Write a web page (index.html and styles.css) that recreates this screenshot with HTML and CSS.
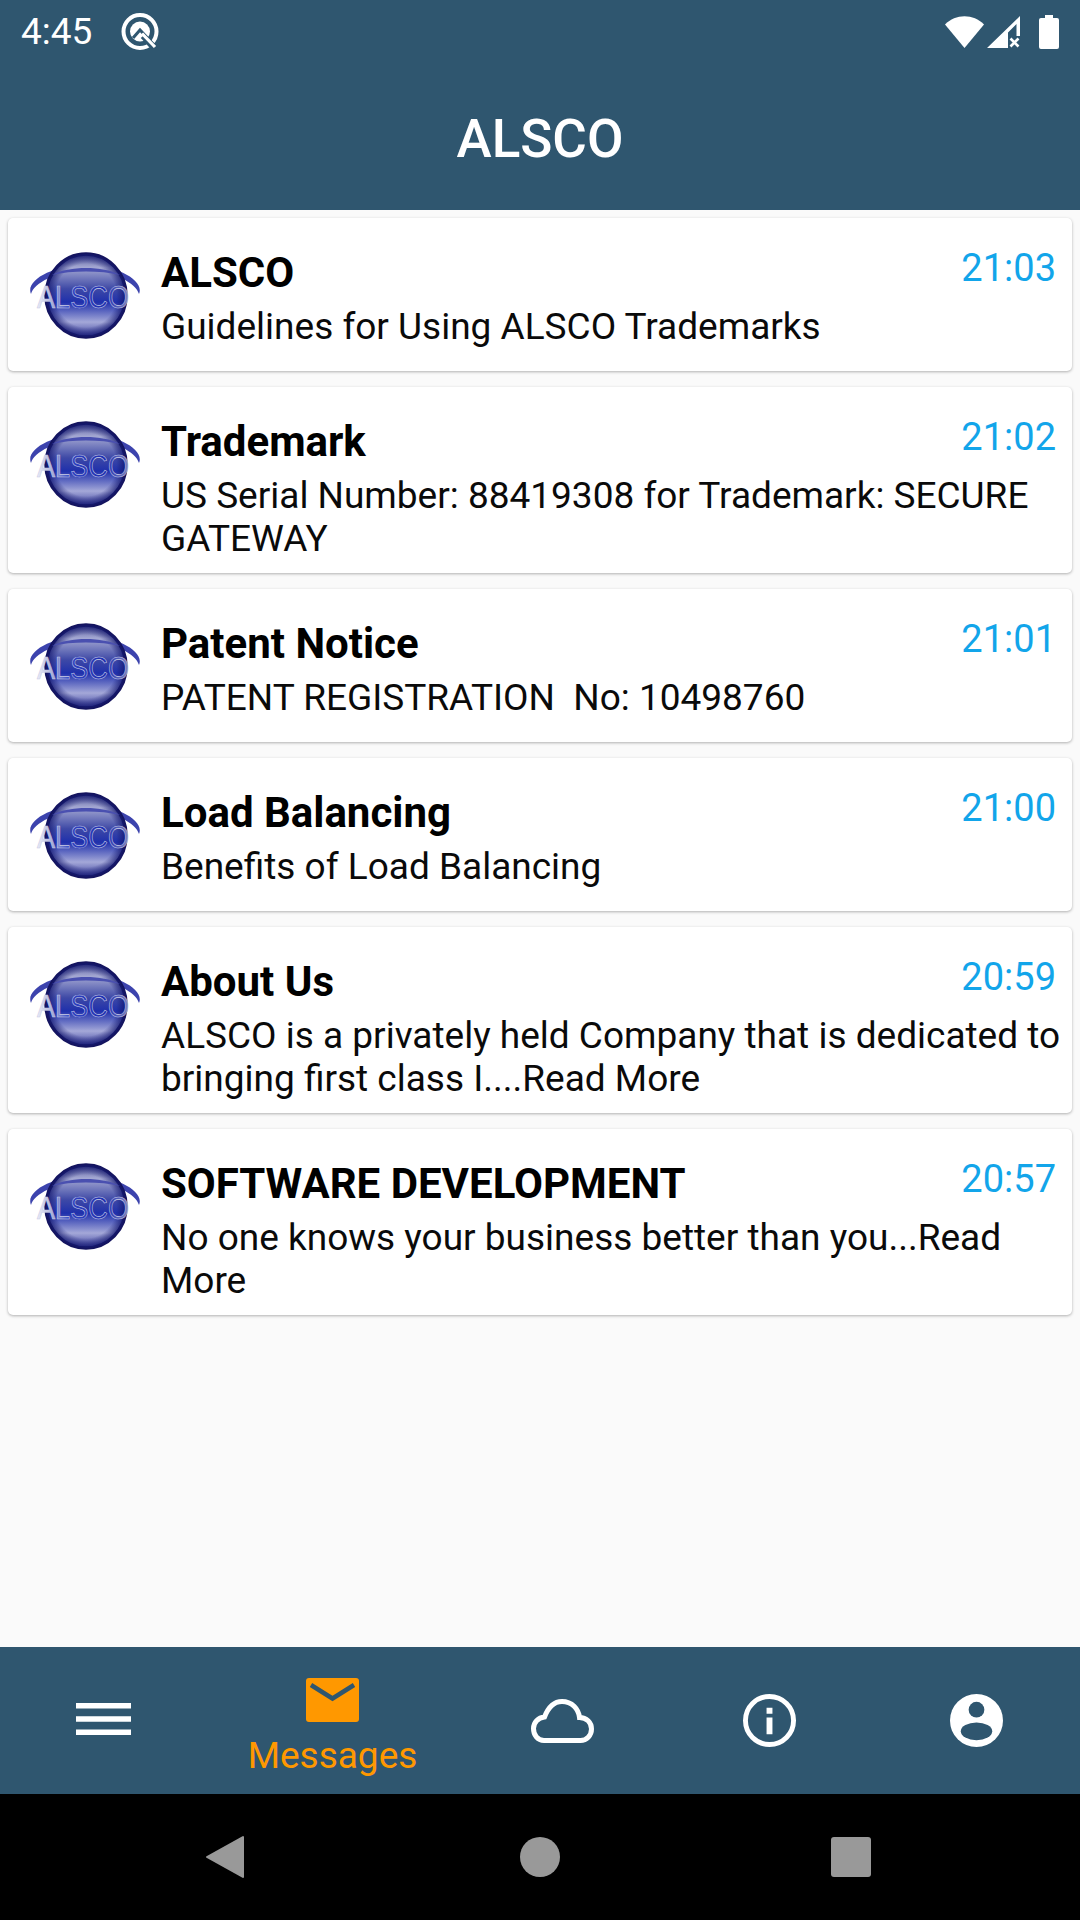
FILE: index.html
```html
<!DOCTYPE html>
<html lang="en">
<head>
<meta charset="utf-8">
<title>ALSCO</title>
<link rel="stylesheet" href="styles.css">
</head>
<body>
<svg class="defs" width="0" height="0" aria-hidden="true">
  <defs>
    <linearGradient id="globe" x1="0" y1="0" x2="0" y2="1">
      <stop offset="0" stop-color="#4d5298"/>
      <stop offset="0.16" stop-color="#a4a8d2"/>
      <stop offset="0.42" stop-color="#3e49a6"/>
      <stop offset="0.58" stop-color="#1f30ac"/>
      <stop offset="0.82" stop-color="#a4a8d8"/>
      <stop offset="1" stop-color="#3a3f9e"/>
    </linearGradient>
    <radialGradient id="edge" cx="50%" cy="50%" r="50%">
      <stop offset="0.76" stop-color="#14186e" stop-opacity="0"/>
      <stop offset="1" stop-color="#14186e" stop-opacity="0.85"/>
    </radialGradient>
    <linearGradient id="lettering" x1="0" y1="0" x2="1" y2="0">
      <stop offset="0" stop-color="#eceef8"/>
      <stop offset="0.16" stop-color="#aeb3da"/>
      <stop offset="0.36" stop-color="#2f42c0"/>
      <stop offset="0.75" stop-color="#1f2fae"/>
      <stop offset="1" stop-color="#7f86c0"/>
    </linearGradient>
    <symbol id="logo" viewBox="0 0 114 90">
      <path d="M3 44C-3 30 26 15 57 15s60 15 54 29c-3-11-25-23-54-23S6 33 3 44z" fill="#3c43ad"/>
      <ellipse cx="58" cy="45.500" rx="40" ry="41.500" fill="url(#globe)" stroke="#14145f" stroke-width="3.500"/>
      <ellipse cx="58" cy="45.500" rx="40" ry="41.500" fill="url(#edge)"/>
      <path d="M24 25c9-5 22-7 34-7s25 2 34 7c-10-2.500-22-3.500-34-3.500s-24 1-34 3.500z" fill="#4a50b0"/>
      <text x="9" y="58" textLength="92" lengthAdjust="spacingAndGlyphs" class="logo-text">ALSCO</text>
    </symbol>
  </defs>
</svg>
<div class="phone">
  <header class="appbar">
    <div class="status">
      <div class="status-left">
        <span class="clock">4:45</span>
        <svg class="q-icon" viewBox="0 0 38 38"><circle cx="19" cy="18.500" r="16.500" fill="none" stroke="#fff" stroke-width="4"/><circle cx="19" cy="18.500" r="10" fill="#fff"/><path d="M12 25l7-8 17 18" fill="none" stroke="#2f566f" stroke-width="3"/><path d="M22 23l10 11" stroke="#2f566f" stroke-width="6" fill="none"/><path d="M21 20.500l13 13.500" stroke="#fff" stroke-width="3.200" fill="none"/></svg>
      </div>
      <div class="status-right">
        <svg class="wifi" viewBox="0 0 39 32"><path d="M19.500 32 0 8.500C10.500-2.500 28.500-2.500 39 8.500z" fill="#fff"/></svg>
        <svg class="signal" viewBox="0 0 33 32"><path d="M33 0v20h-3.500V8L21 16.500V32H0z" fill="#fff"/><path d="M23.500 22.500l8 8m0-8l-8 8" stroke="#fff" stroke-width="2.600" fill="none"/></svg>
        <svg class="battery" viewBox="0 0 20 34"><path d="M6 0h8v3h4a2 2 0 0 1 2 2v27a2 2 0 0 1-2 2H2a2 2 0 0 1-2-2V5a2 2 0 0 1 2-2h4z" fill="#fff"/></svg>
      </div>
    </div>
    <h1 class="apptitle">ALSCO</h1>
  </header>

  <main class="list">
    <article class="card">
      <svg class="logo"><use href="#logo"/></svg>
      <div class="card-body">
        <div class="card-head"><h2 class="card-title">ALSCO</h2><time class="card-time">21:03</time></div>
        <p class="card-text">Guidelines for Using ALSCO Trademarks</p>
      </div>
    </article>
    <article class="card">
      <svg class="logo"><use href="#logo"/></svg>
      <div class="card-body">
        <div class="card-head"><h2 class="card-title">Trademark</h2><time class="card-time">21:02</time></div>
        <p class="card-text">US Serial Number: 88419308 for Trademark: SECURE GATEWAY</p>
      </div>
    </article>
    <article class="card">
      <svg class="logo"><use href="#logo"/></svg>
      <div class="card-body">
        <div class="card-head"><h2 class="card-title">Patent Notice</h2><time class="card-time">21:01</time></div>
        <p class="card-text">PATENT REGISTRATION&nbsp; No: 10498760</p>
      </div>
    </article>
    <article class="card">
      <svg class="logo"><use href="#logo"/></svg>
      <div class="card-body">
        <div class="card-head"><h2 class="card-title">Load Balancing</h2><time class="card-time">21:00</time></div>
        <p class="card-text">Benefits of Load Balancing</p>
      </div>
    </article>
    <article class="card">
      <svg class="logo"><use href="#logo"/></svg>
      <div class="card-body">
        <div class="card-head"><h2 class="card-title">About Us</h2><time class="card-time">20:59</time></div>
        <p class="card-text">ALSCO is a privately held Company that is dedicated to bringing first class I....Read More</p>
      </div>
    </article>
    <article class="card">
      <svg class="logo"><use href="#logo"/></svg>
      <div class="card-body">
        <div class="card-head"><h2 class="card-title">SOFTWARE DEVELOPMENT</h2><time class="card-time">20:57</time></div>
        <p class="card-text">No one knows your business better than you...Read More</p>
      </div>
    </article>
  </main>

  <nav class="tabs">
    <div class="tab">
      <svg class="menu-icon" viewBox="0 0 55 32"><path d="M0 0h55v5.500H0zM0 13.250h55v5.500H0zM0 26.500h55V32H0z" fill="#fff"/></svg>
    </div>
    <div class="tab tab-active">
      <svg class="mail" viewBox="0 0 53 44"><rect width="53" height="44" rx="3" fill="#ff9800"/><path d="M5 7l21.500 13.500L48 7" fill="none" stroke="#2f566f" stroke-width="4.500"/></svg>
      <span class="tab-label">Messages</span>
    </div>
    <div class="tab">
      <svg class="cloud-icon" viewBox="0 0 63 44"><path d="M13 41.500C6.500 41.500 2.500 36 2.500 29.500C2.500 23.500 7 18.500 13.500 18C17 9 23 2.500 31 2.500C41 2.500 47.500 10 48.500 18.500C55.500 18.500 60.500 23.500 60.500 30C60.500 36.500 55.500 41.500 49.500 41.500z" fill="none" stroke="#fff" stroke-width="5"/></svg>
    </div>
    <div class="tab">
      <svg class="round-icon" viewBox="0 0 54 54"><circle cx="27" cy="27" r="24.500" fill="none" stroke="#fff" stroke-width="5"/><path d="M24 14h6v6h-6zM24 24h6v17h-6z" fill="#fff"/></svg>
    </div>
    <div class="tab">
      <svg class="round-icon" viewBox="0 0 54 54"><circle cx="27" cy="27" r="27" fill="#fff"/><circle cx="27" cy="16" r="8" fill="#2f566f"/><ellipse cx="27" cy="38" rx="16" ry="9" fill="#2f566f"/></svg>
    </div>
  </nav>

  <footer class="sysnav">
    <svg class="back" viewBox="0 0 38 44"><path d="M37 2v40L1 22z" fill="#999" stroke="#999" stroke-width="2" stroke-linejoin="round"/></svg>
    <span class="home"></span>
    <span class="recent"></span>
  </footer>
</div>
</body>
</html>
```

FILE: styles.css
```css
* { box-sizing: border-box; }
html, body { margin: 0; padding: 0; }
body { width: 1080px; height: 1920px; overflow: hidden; font-family: Roboto, "Liberation Sans", sans-serif; background: #fafafa; }
.defs { display: block; height: 0; }
.logo-text { font-family: "Liberation Sans", sans-serif; font-size: 32px; font-weight: 400; fill: url(#lettering); stroke: #c8cbe6; stroke-width: 0.6px; }

.phone { width: 1080px; height: 1920px; display: flex; flex-direction: column; }

.appbar { height: 210px; background: #2f566f; color: #fff; display: flex; flex-direction: column; flex: none; }
.status { height: 63px; padding: 0 21px 0 21px; display: flex; justify-content: space-between; align-items: center; }
.status-left, .status-right { display: flex; align-items: center; }
.clock { font-size: 37px; line-height: 63px; }
.q-icon { width: 38px; height: 38px; margin-left: 29px; }
.wifi { width: 39px; height: 32px; }
.signal { width: 33px; height: 32px; margin-left: 3px; }
.battery { width: 20px; height: 34px; margin-left: 19px; }
.apptitle { margin: 0; font-size: 53px; font-weight: 500; text-align: center; line-height: 60px; padding-top: 46px; }

.list { flex: 1; padding: 8px 8px 0; display: flex; flex-direction: column; gap: 16px; }
.card { background: #fff; border-radius: 5px; box-shadow: 0 1px 3px rgba(0,0,0,.3); display: flex; padding: 0 10px 0 20px; min-height: 153px; }
.logo { width: 114px; height: 90px; flex: none; margin-top: 32px; }
.card-body { flex: 1; min-width: 0; margin-left: 19px; padding-top: 31px; padding-bottom: 13px; }
.card-head { display: flex; justify-content: space-between; align-items: flex-start; }
.card-title { margin: 0; font-size: 42px; line-height: 48px; font-weight: 700; color: #000; }
.card-time { font-size: 38px; line-height: 40px; color: #12a5ea; margin-right: 6px; margin-top: -1px; }
.card-text { margin: 8px 0 0; font-size: 37px; line-height: 43px; color: #0a0a0a; }

.tabs { height: 147px; flex: none; background: #2f566f; display: grid; grid-template-columns: 206px 253px 207px 207px 207px; }
.tab { display: flex; flex-direction: column; align-items: center; justify-content: center; }
.menu-icon { width: 55px; height: 32px; margin-bottom: 3px; }
.cloud-icon { width: 63px; height: 44px; }
.round-icon { width: 53px; height: 53px; }
.tab-active { justify-content: flex-start; padding-top: 31px; }
.mail { width: 53px; height: 44px; }
.tab-label { font-size: 37px; line-height: 42px; color: #ff9800; margin-top: 13px; }

.sysnav { height: 126px; flex: none; background: #000; position: relative; display: flex; align-items: center; justify-content: center; }
.back { width: 38px; height: 44px; position: absolute; left: 206px; top: 41px; }
.home { width: 40px; height: 40px; border-radius: 50%; background: #999; position: absolute; left: 520px; top: 43px; }
.recent { width: 40px; height: 40px; border-radius: 3px; background: #999; position: absolute; left: 831px; top: 43px; }
```
